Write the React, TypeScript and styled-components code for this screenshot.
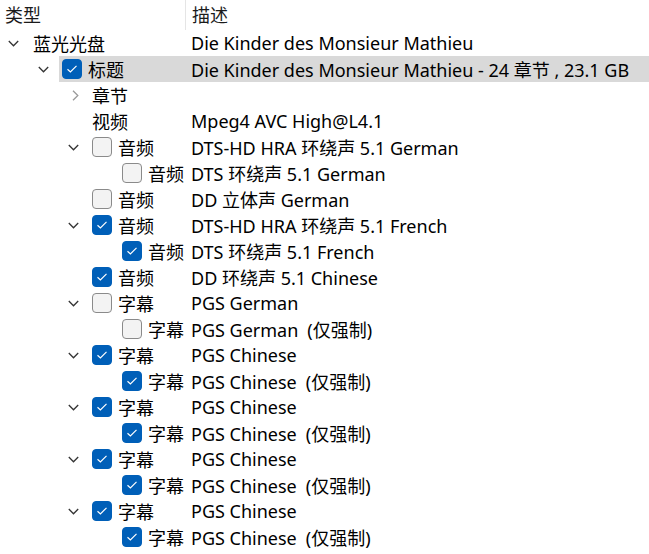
import React from "react";
import styled, { createGlobalStyle } from "styled-components";

const GlobalStyle = createGlobalStyle`
  body {
    margin: 0;
    background: #ffffff;
    overflow: hidden;
  }
`;

const TYPE_COL = 186;
const INDENT = 30;

type Node = {
  level: number;
  label: string;
  desc?: string;
  expander?: "open" | "closed";
  check?: boolean;
  selected?: boolean;
};

const rows: Node[] = [
  { level: 0, label: "蓝光光盘", desc: "Die Kinder des Monsieur Mathieu", expander: "open" },
  { level: 1, label: "标题", desc: "Die Kinder des Monsieur Mathieu - 24 章节 , 23.1 GB", expander: "open", check: true, selected: true },
  { level: 2, label: "章节", expander: "closed" },
  { level: 2, label: "视频", desc: "Mpeg4 AVC High@L4.1" },
  { level: 2, label: "音频", desc: "DTS-HD HRA 环绕声 5.1 German", expander: "open", check: false },
  { level: 3, label: "音频", desc: "DTS 环绕声 5.1 German", check: false },
  { level: 2, label: "音频", desc: "DD 立体声 German", check: false },
  { level: 2, label: "音频", desc: "DTS-HD HRA 环绕声 5.1 French", expander: "open", check: true },
  { level: 3, label: "音频", desc: "DTS 环绕声 5.1 French", check: true },
  { level: 2, label: "音频", desc: "DD 环绕声 5.1 Chinese", check: true },
  { level: 2, label: "字幕", desc: "PGS German", expander: "open", check: false },
  { level: 3, label: "字幕", desc: "PGS German\u2002(仅强制)", check: false },
  { level: 2, label: "字幕", desc: "PGS Chinese", expander: "open", check: true },
  { level: 3, label: "字幕", desc: "PGS Chinese\u2002(仅强制)", check: true },
  { level: 2, label: "字幕", desc: "PGS Chinese", expander: "open", check: true },
  { level: 3, label: "字幕", desc: "PGS Chinese\u2002(仅强制)", check: true },
  { level: 2, label: "字幕", desc: "PGS Chinese", expander: "open", check: true },
  { level: 3, label: "字幕", desc: "PGS Chinese\u2002(仅强制)", check: true },
  { level: 2, label: "字幕", desc: "PGS Chinese", expander: "open", check: true },
  { level: 3, label: "字幕", desc: "PGS Chinese\u2002(仅强制)", check: true },
];

const Tree = styled.div`
  width: 649px;
  height: 554px;
  font-family: "Noto Sans", "Noto Sans CJK SC", sans-serif;
  font-size: 18px;
  color: #000000;
  background: #ffffff;
`;

const Header = styled.div`
  display: flex;
  height: 30px;
  align-items: stretch;
`;

const HeaderCell = styled.div<{ $first?: boolean }>`
  display: flex;
  align-items: center;
  box-sizing: border-box;
  width: ${(p) => (p.$first ? `${TYPE_COL}px` : "auto")};
  flex: ${(p) => (p.$first ? "none" : "1")};
  padding-left: ${(p) => (p.$first ? "5px" : "6px")};
  border-right: ${(p) => (p.$first ? "1px solid #e5e5e5" : "none")};
  color: #1b1b1b;
  padding-bottom: 2px;
`;

const Row = styled.div`
  display: flex;
  align-items: center;
  height: 26px;
`;

const Expander = styled.div<{ $level: number }>`
  flex: none;
  box-sizing: border-box;
  width: ${(p) => p.$level * INDENT + 29}px;
  padding-left: ${(p) => p.$level * INDENT + 8}px;
  display: flex;
  align-items: center;
  height: 100%;
`;

const Item = styled.div<{ $selected?: boolean }>`
  flex: 1;
  display: flex;
  align-items: center;
  height: 100%;
  background: ${(p) => (p.$selected ? "#d9d9d9" : "transparent")};
`;

const TypeCell = styled.div<{ $level: number }>`
  flex: none;
  box-sizing: border-box;
  width: ${(p) => TYPE_COL - (p.$level * INDENT + 29)}px;
  padding-left: ${(p) => (p.$level === 0 ? 4 : 3)}px;
  display: flex;
  align-items: center;
  gap: 6px;
  white-space: nowrap;
`;

const DescCell = styled.div`
  padding-left: 5px;
  white-space: nowrap;
`;

const Box = styled.span<{ $checked: boolean }>`
  flex: none;
  box-sizing: border-box;
  width: 20px;
  height: 20px;
  border-radius: 4px;
  display: inline-flex;
  align-items: center;
  justify-content: center;
  background: ${(p) => (p.$checked ? "#005fb8" : "#f3f3f3")};
  border: 1px solid ${(p) => (p.$checked ? "#005fb8" : "#8a8a8a")};
`;

const Chevron = ({ open }: { open: boolean }) =>
  open ? (
    <svg width="11" height="7" viewBox="0 0 11 7">
      <path d="M0.8 1 L5.5 5.8 L10.2 1" fill="none" stroke="#333333" strokeWidth="1.3" />
    </svg>
  ) : (
    <svg width="11" height="11" viewBox="0 0 11 11" style={{ marginLeft: 2 }}>
      <path d="M3 0.8 L7.8 5.5 L3 10.2" fill="none" stroke="#9a9a9a" strokeWidth="1.3" />
    </svg>
  );

const CheckBox = ({ checked }: { checked: boolean }) => (
  <Box $checked={checked}>
    {checked && (
      <svg width="12" height="10" viewBox="0 0 12 10">
        <path d="M1.5 5.2 L4.4 7.9 L10.5 1.8" fill="none" stroke="#ffffff" strokeWidth="1.2" />
      </svg>
    )}
  </Box>
);

export default function App() {
  return (
    <>
      <GlobalStyle />
      <Tree>
        <Header>
          <HeaderCell $first>类型</HeaderCell>
          <HeaderCell>描述</HeaderCell>
        </Header>
        {rows.map((r, i) => (
          <Row key={i}>
            <Expander $level={r.level}>
              {r.expander && <Chevron open={r.expander === "open"} />}
            </Expander>
            <Item $selected={r.selected}>
              <TypeCell $level={r.level}>
                {r.check !== undefined && <CheckBox checked={r.check} />}
                <span>{r.label}</span>
              </TypeCell>
              <DescCell>{r.desc}</DescCell>
            </Item>
          </Row>
        ))}
      </Tree>
    </>
  );
}
